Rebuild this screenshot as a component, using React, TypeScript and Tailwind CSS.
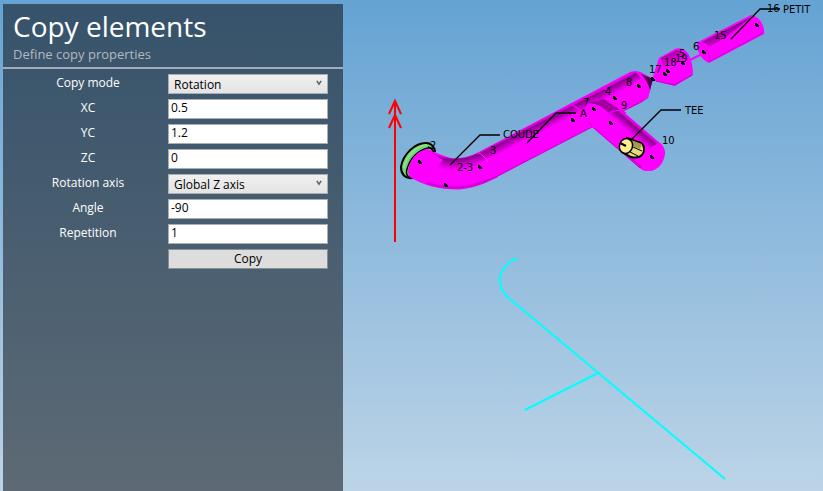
import { type ReactNode, useState } from "react"

type Point = [number, number]

const nodeDots: Point[] = [
	[420, 162],
	[446, 185],
	[480, 167],
	[573, 120],
	[594, 109],
	[615, 98],
	[639, 86],
	[611, 123],
	[652, 157],
	[653, 79],
	[665, 74],
	[668, 71],
	[683, 63],
	[704, 52],
	[757, 25],
]

const nodeLabels: { x: number; y: number; text: string }[] = [
	{ x: 430, y: 149, text: "2" },
	{ x: 457, y: 171, text: "2-3" },
	{ x: 490, y: 154, text: "3" },
	{ x: 583, y: 106, text: "7" },
	{ x: 605, y: 95, text: "4" },
	{ x: 626, y: 86, text: "8" },
	{ x: 621, y: 109, text: "9" },
	{ x: 662, y: 144, text: "10" },
	{ x: 649, y: 73, text: "17" },
	{ x: 664, y: 66, text: "18" },
	{ x: 675, y: 62, text: "19" },
	{ x: 679, y: 57, text: "5" },
	{ x: 693, y: 50, text: "6" },
	{ x: 714, y: 39, text: "15" },
	{ x: 767, y: 12, text: "16" },
]

const callouts = [
	{ text: "COUDE", x: 503, y: 138, line: "450,165 480,135 500,135" },
	{ text: "A", x: 580, y: 117, line: "527,143 556,113 576,113" },
	{ text: "TEE", x: 685, y: 114, line: "631,140 661,110 681,110" },
	{ text: "PETIT", x: 783, y: 13, line: "731,39 760,9 780,9" },
]

const controlClass = "block h-5 w-full border border-[#abadb3] text-xs text-black"

function Row({ id, label, children }: { id: string; label: string; children: ReactNode }) {
	return (
		<div className="grid grid-cols-2">
			<label htmlFor={id} className="text-center text-xs leading-[18px] text-white">
				{label}
			</label>
			{children}
		</div>
	)
}

function TextRow({ id, label, initial }: { id: string; label: string; initial: string }) {
	const [value, setValue] = useState(initial)

	return (
		<Row id={id} label={label}>
			<input
				id={id}
				type="text"
				value={value}
				onChange={(e) => setValue(e.target.value)}
				className={`${controlClass} bg-white px-0.5 pb-1`}
			/>
		</Row>
	)
}

function SelectRow({ id, label, options }: { id: string; label: string; options: string[] }) {
	return (
		<Row id={id} label={label}>
			<div className="relative">
				<select
					id={id}
					className={`${controlClass} appearance-none bg-linear-to-b from-[#f0f0f0] to-[#e4e4e4] px-[5px] pt-px`}
				>
					{options.map((option) => (
						<option key={option}>{option}</option>
					))}
				</select>
				<svg
					viewBox="0 0 6 6"
					className="pointer-events-none absolute top-1.5 right-1.5 size-1.5"
					fill="none"
					stroke="#606060"
					strokeWidth="1.5"
				>
					<path d="M.8 .8 3 4.2 5.2 .8" />
				</svg>
			</div>
		</Row>
	)
}

function CopyPanel() {
	return (
		<form
			onSubmit={(e) => e.preventDefault()}
			className="mt-1 ml-[3px] w-[340px] shrink-0 bg-linear-to-b from-[#36536b] to-[#5d6a75]"
		>
			<header className="border-b-2 border-[#a3acbb] px-[10px] pt-0.5 pb-1">
				<h1 className="text-[28px] leading-10 text-white">Copy elements</h1>
				<p className="text-[13px] leading-[17px] text-[#b4b9be]">Define copy properties</p>
			</header>
			<div className="flex flex-col gap-[5px] pt-[5px] pr-[15px] pl-[5px]">
				<SelectRow id="mode" label="Copy mode" options={["Rotation", "Translation", "Symmetry"]} />
				<TextRow id="xc" label="XC" initial="0.5" />
				<TextRow id="yc" label="YC" initial="1.2" />
				<TextRow id="zc" label="ZC" initial="0" />
				<SelectRow id="axis" label="Rotation axis" options={["Global Z axis", "Global X axis", "Global Y axis"]} />
				<TextRow id="angle" label="Angle" initial="-90" />
				<TextRow id="repetition" label="Repetition" initial="1" />
				<div className="grid grid-cols-2">
					<button
						type="submit"
						className="col-start-2 h-5 border border-[#8a8f94] bg-[#dddddd] text-xs leading-4 text-black"
					>
						Copy
					</button>
				</div>
			</div>
		</form>
	)
}

/** Gradient running across a pipe: bright rim, dark upper side, flat body, thin lower rim */
function PipeShade({ id, from, to }: { id: string; from: Point; to: Point }) {
	return (
		<linearGradient id={id} gradientUnits="userSpaceOnUse" x1={from[0]} y1={from[1]} x2={to[0]} y2={to[1]}>
			<stop offset="0.04" stopColor="#ff00ff" />
			<stop offset="0.1" stopColor="#e000e0" />
			<stop offset="0.15" stopColor="#8c008c" />
			<stop offset="0.24" stopColor="#b400b4" />
			<stop offset="0.4" stopColor="#ff00ff" />
			<stop offset="0.9" stopColor="#ff00ff" />
			<stop offset="0.94" stopColor="#c400c4" />
			<stop offset="0.98" stopColor="#ff00ff" />
		</linearGradient>
	)
}

function Scene() {
	return (
		<svg
			viewBox="343 0 480 491"
			preserveAspectRatio="xMinYMin meet"
			className="h-screen min-w-0 flex-1"
			role="img"
			aria-label="Piping model"
		>
			<defs>
				<PipeShade id="run" from={[570, 102]} to={[586, 133]} />
				<PipeShade id="branch" from={[641, 125]} to={[619, 151]} />
				<linearGradient id="wedge" gradientUnits="userSpaceOnUse" x1="720" y1="31" x2="725" y2="42">
					<stop offset="0" stopColor="#800080" />
					<stop offset="1" stopColor="#f000f0" />
				</linearGradient>
				<linearGradient id="valveTop" gradientUnits="userSpaceOnUse" x1="668" y1="52" x2="674" y2="65">
					<stop offset="0" stopColor="#9c009c" />
					<stop offset="1" stopColor="#ff00ff" />
				</linearGradient>
				<radialGradient id="bend" gradientUnits="userSpaceOnUse" cx="454" cy="106" r="84">
					<stop offset="0.61" stopColor="#ff00ff" />
					<stop offset="0.64" stopColor="#8c008c" />
					<stop offset="0.72" stopColor="#d800d8" />
					<stop offset="0.77" stopColor="#ff00ff" />
					<stop offset="0.94" stopColor="#ff00ff" />
					<stop offset="0.97" stopColor="#d000d0" />
					<stop offset="1" stopColor="#ff00ff" />
				</radialGradient>
			</defs>

			{/* Rotation axis */}
			<g fill="none" stroke="#ff0000" strokeWidth="2">
				<path d="M395 101V242" />
				<path d="M389 114 395 101 401 114M389 128 395 115 401 128" />
			</g>

			{/* Flange */}
			<path
				d="M412 178C405 179 401 174 401 167C403 154 415 143 426 143C431 143 434 147 435 151Z"
				fill="#74d475"
				stroke="#000"
				strokeWidth="2"
			/>
			<path d="M404 168C405 157 416 146 427 145" fill="none" stroke="#8be08a" strokeWidth="2" />
			<path d="M411 178C405 176 406 171 408 166C412 155 423 147 431 148" fill="none" stroke="#000" strokeWidth="1.5" />

			{/* Elbow */}
			<path
				d="M426 149C432 149 438 155 451 158C462 159 471 156 479 152L498 177C486 183 475 188 460 189.5C442 190 424 186 410 177C406 170 410 162 415 156C418 152 422 150 426 149Z"
				fill="url(#bend)"
			/>
			<path d="M410 177C406 170 410 162 415 156C418 152 422 150 427 150L443 160 426 184Z" fill="#ff00ff" />
			<path d="M428 147C431 147 432 150 434 152" fill="none" stroke="#000" strokeWidth="1.5" />

			{/* Main run */}
			<path
				d="M477 153 630 72C636 69 646 75 653 79L648 98C640 104 630 108 622 112L497 177C490 180 480 181 477 173Z"
				fill="url(#run)"
			/>
			<path d="M477 152C482 154 486 158 488 162" fill="none" stroke="#e838e8" />
			<path
				d="M570 104C575 106 578 108 580 111M602 87C608 90 612 94 614 98"
				fill="none"
				stroke="#f000f0"
				strokeWidth="1.5"
			/>
			<path d="M634 71C640 75 645 83 648 98L653 79C647 76 640 70 634 71Z" fill="#ff00ff" />
			<path d="M641 74 653 79 650 90C648 83 645 78 641 74Z" fill="#520052" />

			{/* Branch */}
			<path
				d="M594 101C604 97 618 101 626 114L660 143C666 148 666 156 661 164C656 171 647 173 641 169L592 127C584 119 586 105 594 101Z"
				fill="url(#branch)"
			/>
			<path d="M590 103C600 98 613 103 622 112L608 112C602 106 596 104 590 103Z" fill="#a000a0" />
			<path d="M585 104C594 103 603 106 609 114L620 151 592 127Z" fill="#ff00ff" />
			<path d="M609 113C614 110 619 109 626 113" fill="none" stroke="#f000f0" strokeWidth="1.5" />
			<path d="M660 143C652 144 644 154 641 169C648 173 657 171 662 163C666 155 666 148 660 143Z" fill="#ff00ff" />
			<path d="M594 128 640 168" stroke="#c800c8" />

			{/* Valve body, link and end pipe */}
			<path d="M652 79 659 58 675 49C680 47 686 50 689 55C692 61 693 68 693 75L675 86 655 81Z" fill="#ff00ff" />
			<path d="M661 58 677 50C683 51 687 56 688 61L676 67 663 66Z" fill="url(#valveTop)" />
			<path d="M656 81 674 85 692 75" fill="none" stroke="#cc00cc" />
			<path d="M688 61 700 55" stroke="#ff00ff" strokeWidth="2" />
			<path d="M698 42 751 15C759 16 765 25 764 34L709 63C701 60 695 49 698 42Z" fill="#ff00ff" />
			<path d="M702 42 751 17 725 38 709 47C707 44 705 43 702 42Z" fill="url(#wedge)" />
			<path d="M698 43C705 45 711 54 709 62M710 61 763 33" fill="none" stroke="#d000d0" />

			{/* Tee fitting */}
			<path
				d="M627 138 641 143C645 146 645 151 642 155C639 158 635 158 631 157L622 152Z"
				fill="#e8d97c"
				stroke="#000"
				strokeWidth="2"
			/>
			<path d="M631 140 642 144 640 149 633 146Z" fill="#a5984f" />
			<path d="M633 147 642 151M630 152 638 156" stroke="#000" />
			<ellipse cx="626" cy="146" rx="6.5" ry="7.5" transform="rotate(20 626 146)" fill="#ffed92" stroke="#000" strokeWidth="1.5" />
			<path d="M620 143 626 146" stroke="#000" strokeWidth="2" />

			{/* Preview of the copied line */}
			<g fill="none" stroke="#00ffff" strokeWidth="2">
				<path d="M517 258C503 264 499 275 500 282C501 290 504 294 510 299L725 479" />
				<path d="M598 373 525 410" />
			</g>

			{nodeDots.map(([x, y]) => (
				<path key={`${x}-${y}`} d={`M${x - 2} ${y - 2}h2v1h1v1h1v2h-3v-1h-1z`} fill="#000" />
			))}

			<g fontSize="11" className="font-['DejaVu_Sans_Condensed','DejaVu_Sans',sans-serif]">
				{callouts.map((c) => (
					<g key={c.text}>
						<polyline points={c.line} fill="none" stroke="#000" strokeWidth="1.3" />
						<text x={c.x} y={c.y}>
							{c.text}
						</text>
					</g>
				))}
				{nodeLabels.map((n) => (
					<text key={n.text} x={n.x} y={n.y}>
						{n.text}
					</text>
				))}
			</g>
		</svg>
	)
}

export default function App() {
	return (
		<main className="flex min-h-screen bg-linear-to-b from-[#65a3d3] to-[#bcd4e7] font-['Open_Sans','Noto_Sans',sans-serif]">
			<CopyPanel />
			<Scene />
		</main>
	)
}
